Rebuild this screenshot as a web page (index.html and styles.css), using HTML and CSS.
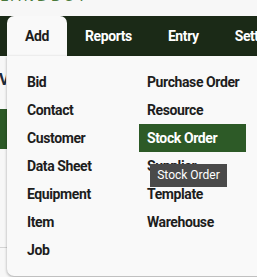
FILE: index.html
```html
<!DOCTYPE html>
<html lang="en">
<head>
    <meta charset="UTF-8">
    <meta name="viewport" content="width=device-width, initial-scale=1.0">
    <title>Add Menu</title>
    <link rel="stylesheet" href="styles.css">
</head>
<body>
    <div class="brand"><span>LANDBOT</span></div>

    <nav class="nav">
        <a class="tab active" href="#">Add</a>
        <a class="tab" href="#">Reports</a>
        <a class="tab" href="#">Entry</a>
        <a class="tab" href="#">Settings</a>
    </nav>

    <div class="page">
        <h2>View</h2>
        <div class="page-btn"></div>
        <hr class="page-rule">
    </div>

    <div class="dropdown">
        <ul class="menu-col">
            <li><a href="#">Bid</a></li>
            <li><a href="#">Contact</a></li>
            <li><a href="#">Customer</a></li>
            <li><a href="#">Data Sheet</a></li>
            <li><a href="#">Equipment</a></li>
            <li><a href="#">Item</a></li>
            <li><a href="#">Job</a></li>
        </ul>
        <ul class="menu-col">
            <li><a href="#">Purchase Order</a></li>
            <li><a href="#">Resource</a></li>
            <li><a class="hover" href="#">Stock Order</a></li>
            <li><a href="#">Supplier</a></li>
            <li><a href="#">Template</a></li>
            <li><a href="#">Warehouse</a></li>
        </ul>
    </div>

    <div class="tooltip">Stock Order</div>
</body>
</html>
```

FILE: styles.css
```css
body {
    margin: 0;
    height: 277px;
    overflow: hidden;
    font-family: Roboto, "Liberation Sans", Arial, sans-serif;
    background-color: #f7f7f7;
}
.brand {
    height: 16px;
    overflow: hidden;
}
.brand span {
    display: block;
    margin-top: -12px;
    padding-left: 1px;
    font: italic 14px "DejaVu Sans", sans-serif;
    line-height: 16px;
    letter-spacing: 3px;
    color: #4a7a3c;
}
.nav {
    display: flex;
    height: 40px;
    padding-left: 7px;
    background-color: #1b2a17;
    white-space: nowrap;
}
.tab {
    padding: 0 18px;
    line-height: 40px;
    font-size: 14px;
    font-weight: bold;
    letter-spacing: -0.4px;
    color: white;
    text-decoration: none;
}
.tab.active {
    background-color: #f9f9f9;
    color: #1d1d1d;
    border-radius: 7px 7px 0 0;
}
.page {
    padding-top: 14px;
}
.page h2 {
    width: 7px;
    overflow: hidden;
    margin: 0 0 0 -1px;
    font-size: 16px;
    line-height: 20px;
    color: #1d2b3a;
}
.page-btn {
    width: 60px;
    height: 40px;
    margin-top: 19px;
    background-color: #2d5a27;
}
.page-rule {
    margin: 98px 0 0;
    border: 0;
    border-top: 1px solid #d4d4d4;
}
.dropdown {
    position: absolute;
    top: 56px;
    left: 7px;
    width: 262px;
    height: 220px;
    padding: 12px 0 0 12px;
    box-sizing: border-box;
    display: flex;
    gap: 13px;
    background-color: #f9f9f9;
    border-radius: 0 0 7px 7px;
    box-shadow: 0 1px 3px rgba(0, 0, 0, 0.35);
}
.menu-col {
    list-style: none;
    margin: 0;
    padding: 0;
    width: 107px;
}
.menu-col a {
    display: block;
    height: 28px;
    line-height: 28px;
    padding: 0 8px;
    font-size: 14px;
    font-weight: bold;
    letter-spacing: -0.4px;
    color: #1d1d1d;
    text-decoration: none;
    white-space: nowrap;
}
.menu-col a.hover {
    background-color: #2d5a27;
    color: white;
}
.tooltip {
    position: absolute;
    top: 164px;
    left: 150px;
    width: 77px;
    height: 23px;
    line-height: 23px;
    text-align: center;
    font-size: 12px;
    color: white;
    background-color: #4a4a4a;
}
```
